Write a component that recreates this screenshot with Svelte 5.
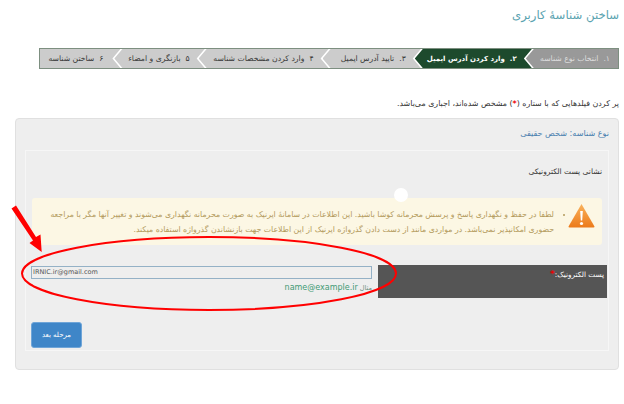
<script>
  const steps = [
    { n: '۱.', label: 'انتخاب نوع شناسه', cls: 'done w1' },
    { n: '۲.', label: 'وارد کردن آدرس ایمیل', cls: 'active w2' },
    { n: '۳.', label: 'تایید آدرس ایمیل', cls: 'w3' },
    { n: '۴', label: 'وارد کردن مشخصات شناسه', cls: 'w4' },
    { n: '۵', label: 'بازنگری و امضاء', cls: 'w5' },
    { n: '۶', label: 'ساختن شناسه', cls: 'w6' }
  ];
</script>

<div class="page" dir="rtl">
  <h1>ساختن شناسهٔ کاربری</h1>

  <ol class="stepper">
    {#each steps as s}
      <li class="step {s.cls}"><span class="num">{s.n}</span><span>{s.label}</span></li>
    {/each}
  </ol>

  <p class="notice">پر کردن فیلدهایی که با ستاره (<b>*</b>) مشخص شده‌اند، اجباری می‌باشد.</p>

  <section class="panel">
    <h2>نوع شناسه: شخص حقیقی</h2>
    <div class="inner">
      <h3>نشانی پست الکترونیکی</h3>
      <div class="alert">
        <svg class="warn" viewBox="0 0 27 25" width="27" height="25" aria-hidden="true">
          <defs>
            <linearGradient id="wg" x1="0" y1="0" x2="0" y2="1">
              <stop offset="0" stop-color="#f9b25c" />
              <stop offset="1" stop-color="#ec7a1a" />
            </linearGradient>
          </defs>
          <path d="M13.5 1 L26.5 23.5 Q26.6 24.5 25.5 24.5 L1.5 24.5 Q.4 24.5 .5 23.5 Z" fill="url(#wg)" />
          <path d="M12.2 8 H14.8 L14.2 17.5 H12.8 Z" fill="#fff" />
          <circle cx="13.5" cy="20.5" r="1.6" fill="#fff" />
        </svg>
        <ul>
          <li>لطفا در حفظ و نگهداری پاسخ و پرسش محرمانه کوشا باشید. این اطلاعات در سامانهٔ ایرنیک به صورت محرمانه نگهداری می‌شوند و تغییر آنها مگر با مراجعه حضوری امکانپذیر نمی‌باشد. در مواردی مانند از دست دادن گذرواژه ایرنیک از این اطلاعات جهت بازنشاندن گذرواژه استفاده میکند.</li>
        </ul>
      </div>

      <div class="field">
        <label for="email">پست الکترونیک:<b>*</b></label>
        <div class="control">
          <input id="email" dir="ltr" value="IRNIC.ir@gmail.com" />
          <div class="help">مثال <span>name@example.ir</span></div>
        </div>
      </div>

      <div class="actions"><button type="button">مرحله بعد</button></div>
    </div>
  </section>

  <span class="dot"></span>
  <svg class="marks" viewBox="0 0 624 404" width="624" height="404" aria-hidden="true">
    <ellipse cx="209" cy="273.5" rx="187" ry="36.5" fill="none" stroke="#f00" stroke-width="2" />
    <path d="M11.5 208.5 L16 205.5 L36 237 L40.5 234.5 L41.7 252 L29.5 243 L33 240.5 Z" fill="#f00" />
  </svg>
</div>

<style>
  :global(body) {
    margin: 0;
    background: #fff;
  }
  .page {
    position: relative;
    width: 624px;
    height: 404px;
    overflow: hidden;
    box-sizing: border-box;
    padding: 0 5px 0 15px;
    font-family: "DejaVu Sans", sans-serif;
    color: #333;
  }
  h1 {
    margin: 0;
    padding-top: 6px;
    height: 42px;
    box-sizing: border-box;
    font-size: 11.7px;
    line-height: 18px;
    font-weight: 400;
    color: #5aa3b0;
  }
  .stepper {
    display: flex;
    list-style: none;
    margin: 6px 0 0 24px;
    padding: 0;
    height: 21px;
    border: 1px solid #7d8f80;
    box-sizing: border-box;
    background: #fff;
  }
  .step {
    display: flex;
    align-items: center;
    justify-content: flex-start;
    gap: 5px;
    height: 100%;
    box-sizing: border-box;
    padding-right: 15px;
    margin-right: -6px;
    font-size: 7.7px;
    white-space: nowrap;
    background: #ccc;
    color: #3a3a3a;
    clip-path: polygon(0 50%, 8px 0, 100% 0, calc(100% - 8px) 50%, 100% 100%, 8px 100%);
  }
  .w1 { width: 93px; margin-right: 0; padding-right: 8px; clip-path: polygon(0 50%, 8px 0, 100% 0, 100% 100%, 8px 100%); }
  .w2 { width: 118px; font-size: 7px; }
  .w3 { width: 99px; }
  .w4 { width: 131px; }
  .w5 { width: 91px; }
  .w6 { width: 81px; padding-right: 17px; clip-path: polygon(0 0, 100% 0, calc(100% - 8px) 50%, 100% 100%, 0 100%); }
  .done { background: #999; color: #ddd; }
  .active { background: #1d4a2d; color: #fff; font-weight: 700; }
  .notice {
    margin: 0;
    height: 28px;
    padding-top: 29px;
    font-size: 7.9px;
    line-height: 12px;
    color: #333;
  }
  .notice b { color: #e00; font-weight: 700; }
  .panel {
    margin-top: -8px;
    height: 252px;
    box-sizing: border-box;
    background: #eee;
    border: 1px solid #e0e0e0;
    border-radius: 4px;
    padding: 0 9px 0 9px;
  }
  h2 {
    margin: 0;
    height: 31px;
    font-size: 8.1px;
    line-height: 28px;
    font-weight: 400;
    color: #4a7fae;
  }
  .inner {
    height: 201px;
    box-sizing: border-box;
    border: 1px solid #f6f6f6;
    padding: 0;
  }
  h3 {
    margin: 0;
    height: 47px;
    padding: 16px 6px 0 0;
    box-sizing: border-box;
    font-size: 7.5px;
    line-height: 10px;
    font-weight: 400;
    color: #333;
  }
  .alert {
    display: flex;
    align-items: flex-start;
    gap: 5px;
    height: 47px;
    box-sizing: border-box;
    margin: 0 6px;
    padding: 5px 7px 0 0;
    background: #fcf7e4;
    border-radius: 3px;
    color: #b39a5c;
    font-size: 7.8px;
    line-height: 15px;
  }
  .warn { flex: none; }
  .alert ul {
    margin: 4px 0 0;
    padding: 0 9px 0 0;
    width: 518px;
    box-sizing: border-box;
  }
  .field {
    display: flex;
    margin: 19px 0 0 5px;
    height: 58px;
  }
  label {
    flex: none;
    width: 231px;
    height: 35px;
    box-sizing: border-box;
    background: #555;
    border: 1px solid #eee;
    padding: 3px 3px 0 0;
    color: #fff;
    font-size: 7.3px;
    line-height: 12px;
  }
  label b { color: #e00; font-size: 9px; }
  .control {
    flex: none;
    width: 341px;
    margin-right: 5px;
    padding-top: 2px;
  }
  input {
    display: block;
    width: 100%;
    height: 13px;
    box-sizing: border-box;
    margin: 0;
    padding: 0 1px 1px;
    border: 1.5px solid #94b1c6;
    border-radius: 0;
    background: #eee;
    color: #555;
    font: 6.5px/9px "DejaVu Sans", sans-serif;
    outline: none;
  }
  .help {
    margin-top: 2.5px;
    font-size: 6.5px;
    line-height: 11px;
    color: #6f8f80;
  }
  .help span {
    font-size: 8px;
    color: #3f9a74;
  }
  .actions {
    direction: ltr;
    padding-left: 5px;
  }
  button {
    display: block;
    width: 51px;
    height: 26px;
    padding: 0;
    border: 1px solid #6fa5d8;
    border-radius: 3px;
    background: #3f86c8;
    color: #fff;
    font: 7px/1 "DejaVu Sans", sans-serif;
  }
  .dot {
    position: absolute;
    left: 394px;
    top: 188px;
    width: 14px;
    height: 14px;
    border-radius: 50%;
    background: #fff;
  }
  .marks {
    position: absolute;
    left: 0;
    top: 0;
    pointer-events: none;
  }
</style>
